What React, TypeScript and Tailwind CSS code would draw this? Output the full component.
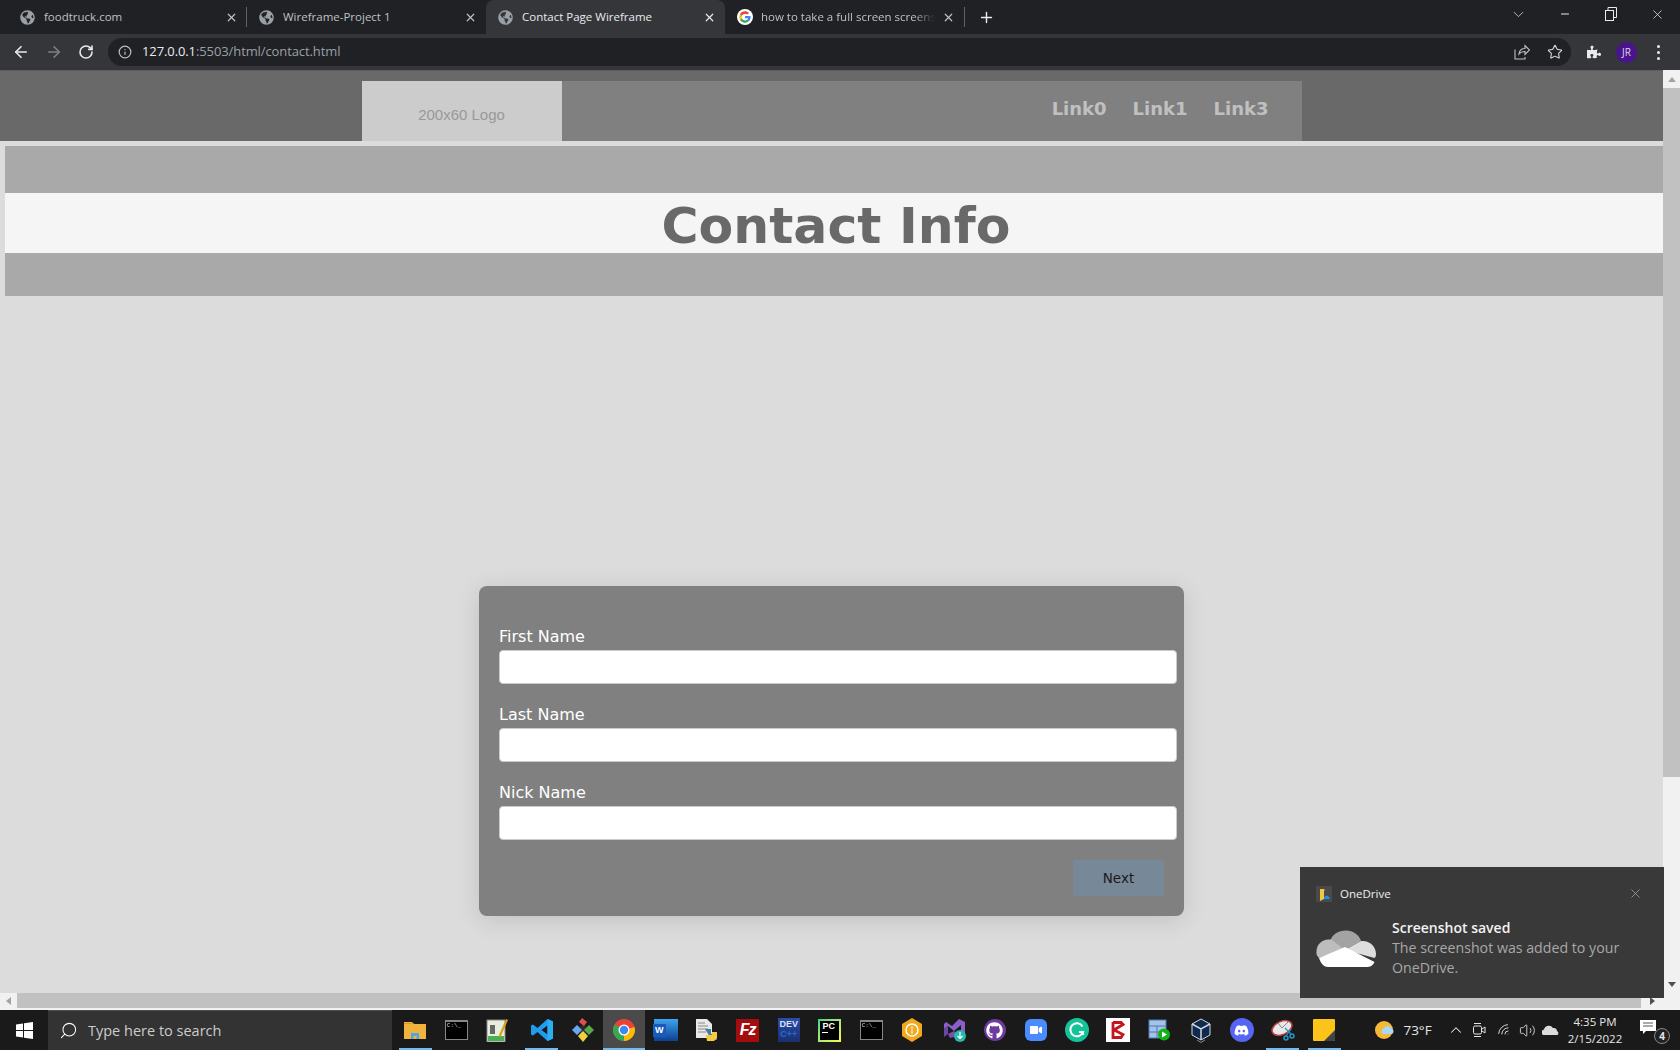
import React from "react";
import { ArrowLeft, ArrowRight, RotateCw, Info, Star, X, Plus, ChevronDown, Minus, Search, ChevronUp, Volume2, Wifi } from "lucide-react";
import { FaGlobeAmericas, FaGithub, FaDiscord, FaPuzzlePiece, FaVideo } from "react-icons/fa";

const ui = "font-['Open_Sans','Noto_Sans',sans-serif]";

function GoogleG() {
  return (
    <svg width="16" height="16" viewBox="0 0 48 48" className="shrink-0">
      <circle cx="24" cy="24" r="24" fill="#fff" />
      <path fill="#EA4335" d="M24 14c2.7 0 5 .9 6.8 2.7l5-5C32.800 8.800 28.800 7 24 7 17.400 7 11.700 10.800 8.900 16.300l5.900 4.600C16.200 16.800 19.800 14 24 14z" />
      <path fill="#4285F4" d="M40.600 24.400c0-1.200-.1-2.300-.3-3.400H24v6.500h9.300c-.4 2.100-1.600 3.900-3.400 5.100l5.700 4.400c3.300-3.100 5-7.600 5-12.600z" />
      <path fill="#FBBC05" d="M14.800 27.100c-.4-1-.6-2-.6-3.100s.2-2.100.6-3.100l-5.900-4.600C7.700 18.700 7 21.300 7 24s.7 5.300 1.900 7.700l5.900-4.600z" />
      <path fill="#34A853" d="M24 41c4.600 0 8.500-1.500 11.400-4.100l-5.600-4.300c-1.600 1.100-3.600 1.700-5.800 1.700-4.200 0-7.800-2.800-9.200-6.700l-5.900 4.500C11.700 37.200 17.400 41 24 41z" />
    </svg>
  );
}

function Tab({ title, active, google, fade }: { title: string; active?: boolean; google?: boolean; fade?: boolean }) {
  return (
    <div className={`w-[239px] h-[34px] flex items-center pl-[12px] pr-[9px] shrink-0 ${active ? "bg-[#35363a] rounded-t-[8px]" : ""}`}>
      {google ? <GoogleG /> : <FaGlobeAmericas size={15} className="text-[#9aa0a6] shrink-0" />}
      <span className={`${google ? "ml-[8px]" : "ml-[9px]"} w-[174px] overflow-hidden whitespace-nowrap text-[11.5px] ${active ? "text-[#e8eaed]" : "text-[#bdc1c6]"} ${fade ? "[mask-image:linear-gradient(to_right,black_88%,transparent)]" : ""}`}>{title}</span>
      <X size={13} strokeWidth={2.2} className={`ml-auto shrink-0 ${active ? "text-[#e8eaed]" : "text-[#bdc1c6]"}`} />
    </div>
  );
}

function TabBar() {
  return (
    <div className="h-[34px] bg-[#202124] flex items-center shrink-0 relative">
      <div className="w-[8px]" />
      <Tab title="foodtruck.com" />
      <div className="w-px h-[20px] bg-[#5f6368] -ml-px" />
      <Tab title="Wireframe-Project 1" />
      <Tab title="Contact Page Wireframe" active />
      <Tab title="how to take a full screen screenshot" google fade />
      <div className="w-px h-[20px] bg-[#5f6368]" />
      <Plus size={17} strokeWidth={2} className="ml-[13px] text-[#e8eaed]" />
      <div className="ml-auto flex items-center h-full pb-[6px]">
        <ChevronDown size={17} strokeWidth={1.1} className="text-[#dadce0]" />
        <div className="w-[46px] ml-[15px] flex justify-center"><Minus size={12} className="text-[#e8eaed]" /></div>
        <div className="w-[46px] flex justify-center">
          <svg width="12" height="14" viewBox="0 0 12 14" fill="none" stroke="#e8eaed" strokeWidth="1"><rect x="0.500" y="3.500" width="8" height="10" /><path d="M3 3.500V.500h8.500v10H8.500" /></svg>
        </div>
        <div className="w-[46px] flex justify-center"><X size={15} strokeWidth={1.2} className="text-[#e8eaed]" /></div>
      </div>
    </div>
  );
}

function Toolbar() {
  return (
    <div className="h-[36px] bg-[#35363a] flex items-center shrink-0">
      <div className="w-[42px] flex justify-center"><ArrowLeft size={18} strokeWidth={2.2} className="text-[#e8eaed]" /></div>
      <div className="w-[24px] flex justify-center"><ArrowRight size={18} strokeWidth={2.2} className="text-[#7d8084]" /></div>
      <div className="w-[40px] flex justify-center"><RotateCw size={16} strokeWidth={2.4} className="text-[#e8eaed]" /></div>
      <div className="w-[1463px] ml-[2px] h-[28px] rounded-full bg-[#202124] flex items-center pl-[10px] pr-[8px]">
        <Info size={14} className="text-[#bdc1c6]" />
        <span className="ml-[10px] text-[13px] tracking-[-0.1px] text-[#9aa0a6] whitespace-nowrap"><span className="text-[#e8eaed]">127.0.0.1</span>:5503/html/contact.html</span>
        <div className="ml-auto flex items-center gap-[17px]">
          <svg width="16" height="16" viewBox="0 0 16 16" fill="none" stroke="#bdc1c6" strokeWidth="1.100"><path d="M1 5.500v9.500h10v-2M5 10c.4-3.500 3-5.500 6-5.500V1.500L15.500 6 11 10.500V7.500C8.500 7.500 6.500 8 5 10z" /></svg>
          <Star size={16} strokeWidth={1.6} className="text-[#dadce0]" />
        </div>
      </div>
      <div className="w-[46px] flex justify-center"><FaPuzzlePiece size={14} className="text-[#e8eaed]" /></div>
      <div className="w-[21px] h-[21px] -ml-[1px] rounded-full bg-[#4a148c] flex items-center justify-center text-[10px] text-[#e1d4f2]">JR</div>
      <div className="ml-[20px] flex flex-col gap-[3px]">
        <div className="w-[3px] h-[3px] rounded-full bg-[#e8eaed]" />
        <div className="w-[3px] h-[3px] rounded-full bg-[#e8eaed]" />
        <div className="w-[3px] h-[3px] rounded-full bg-[#e8eaed]" />
      </div>
    </div>
  );
}

function Field({ label }: { label: string }) {
  return (
    <div className="flex flex-col">
      <label className="h-[24px] leading-[22px] text-[16px] text-white">{label}</label>
      <input className="h-[34px] w-[678px] bg-white rounded-[4px] border border-[#cccccc] outline-none" />
    </div>
  );
}

function Page() {
  return (
    <div className="flex-1 min-w-0 bg-[#dcdcdc] overflow-hidden font-['DejaVu_Sans',sans-serif]">
      <header className="h-[71px] bg-[#696969] pt-[10px] border-t border-[#5c5c62]">
        <div className="w-[940px] h-[60px] mx-auto bg-[#808080] flex items-center justify-between pr-[33px]">
          <div className="w-[200px] h-[60px] bg-[#cccccc] flex items-center justify-center pt-[8px] font-['Liberation_Sans',sans-serif] text-[15px] text-[#999999]">200x60 Logo</div>
          <nav className="flex gap-[26px] pb-[6px] text-[18px] font-bold text-[#c0c0c0]">
            <span>Link0</span>
            <span>Link1</span>
            <span>Link3</span>
          </nav>
        </div>
      </header>
      <section className="mt-[5px] mx-[5px] mr-0">
        <div className="h-[47px] bg-[#a9a9a9]" />
        <h1 className="h-[60px] leading-[66px] pl-[4px] bg-[#f5f5f5] text-center text-[50.5px] font-bold text-[#696969]">Contact Info</h1>
        <div className="h-[43px] bg-[#a9a9a9]" />
      </section>
      <form className="mt-[290px] ml-[479px] w-[705px] h-[330px] bg-[#808080] rounded-[8px] shadow-[0_4px_24px_rgba(0,0,0,0.12)] pt-[40px] pl-[20px] flex flex-col gap-[20px]">
        <Field label="First Name" />
        <Field label="Last Name" />
        <Field label="Nick Name" />
        <div className="flex justify-end pr-[20px]">
          <button type="button" className="w-[91px] h-[36px] bg-[#778899] text-[13.5px] text-[#1a1a1a]">Next</button>
        </div>
      </form>
    </div>
  );
}

function VScroll() {
  return (
    <div className="w-[17px] shrink-0 bg-[#f1f1f1] flex flex-col items-center">
      <div className="h-[18px] flex items-center justify-center">
        <div className="w-0 h-0 border-x-[4px] border-x-transparent border-b-[5px] border-b-[#a3a3a3]" />
      </div>
      <div className="w-full h-[689px] bg-[#c1c1c1]" />
      <div className="flex-1" />
      <div className="h-[17px] flex items-center justify-center">
        <div className="w-0 h-0 border-x-[4px] border-x-transparent border-t-[5px] border-t-[#505050]" />
      </div>
    </div>
  );
}

function HScroll() {
  return (
    <div className="h-[17px] shrink-0 bg-[#f1f1f1] flex items-start">
      <div className="w-[17px] h-[15px] flex items-center justify-center">
        <div className="w-0 h-0 border-y-[4px] border-y-transparent border-r-[5px] border-r-[#a3a3a3]" />
      </div>
      <div className="w-[1624px] h-[15px] bg-[#c1c1c1]" />
      <div className="w-[22px] h-[15px] flex items-center justify-center">
        <div className="w-0 h-0 border-y-[4px] border-y-transparent border-l-[5px] border-l-[#505050]" />
      </div>
    </div>
  );
}

function Toast() {
  return (
    <div className={`absolute left-[1300px] top-[867px] w-[364px] h-[131px] bg-[#393939] ${ui}`}>
      <div className="flex items-center h-[16px] mt-[19px] ml-[16px]">
        <svg width="16" height="16" viewBox="0 0 16 16">
          <rect width="16" height="16" fill="#4a4a4a" />
          <path d="M4 3h4l1 1.500h-1V13L4 15z" fill="#f4c542" />
          <path d="M8 12c.3-1.500 1.500-2.500 2.800-2.200C12 9.500 13.500 11 14 13H8z" fill="#1f8ceb" />
        </svg>
        <span className="ml-[8px] text-[11.5px] text-[#f0f0f0]">OneDrive</span>
        <X size={15} strokeWidth={1.2} className="text-[#a8a8a8] ml-[237px] -mt-[1px]" />
      </div>
      <div className="flex mt-[23px] ml-[16px]">
        <svg width="60" height="40" viewBox="0 0 60 40" className="mt-[3px] shrink-0">
          <path d="M14 13c3-9 14-13 23-9 4 2 7 5 8 9l-16 9z" fill="#a3a3a3" />
          <path d="M16 12c-9-2-15 4-15.500 11C0 26 1 28 3 30l26-8z" fill="#bdbdbd" />
          <path d="M45 13c8-1 15 5 15 13 0 2-.5 3-1.500 4L29 22z" fill="#dedede" />
          <path d="M3 30l26-11 29.500 15c-1 2-3 5-7 5H12c-4 0-7-3-9-9z" fill="#ffffff" />
        </svg>
        <div className="ml-[16px] w-[240px] -mt-[7px] text-[14.2px] leading-[20px]">
          <div className="font-semibold text-[14px] text-[#f2f2f2]">Screenshot saved</div>
          <div className="text-[#a8a8a8]">The screenshot was added to your OneDrive.</div>
        </div>
      </div>
    </div>
  );
}

const Cell = ({ children, active, extra }: { children: React.ReactNode; active?: boolean; extra?: string }) => (
  <div className={`w-[41.2px] h-[40px] flex items-center justify-center relative shrink-0 ${active ? "bg-[#4a4a4a]" : ""} ${extra ?? ""}`}>{children}</div>
);

const Underline = ({ w = "w-[33px]" }: { w?: string }) => <div className={`absolute bottom-0 left-[4px] ${w} h-[2px] bg-[#76b9ed]`} />;

const Cmd = () => (
  <div className="w-[23px] h-[20px] bg-black border border-[#888] border-t-[2px] text-[6px] leading-[8px] pl-[1px] text-[#ddd] font-['Liberation_Mono',monospace]">C:\_</div>
);

function TaskIcons() {
  return (
    <div className="flex ml-[3px]">
      <Cell>
        <svg width="22" height="20" viewBox="0 0 22 20"><path d="M0 2h8l2 2h12v15H0z" fill="#f2b33d" /><path d="M0 4h9l1-1H0z" fill="#d99a22" /><path d="M7 19v-6h8v6h-2.500v-3h-3v3z" fill="#4aa8ea" /></svg>
        <Underline />
      </Cell>
      <Cell><Cmd /></Cell>
      <Cell>
        <svg width="24" height="24" viewBox="0 0 24 24"><rect x="2" y="2" width="18" height="22" fill="#e8eede" stroke="#888" /><rect x="5" y="7" width="5" height="9" fill="#666" /><path d="M3 18h16v5H3z" fill="#4caf50" /><path d="M14 17L21 1l2 1-7 16-2 1z" fill="#d9a21b" /></svg>
      </Cell>
      <Cell extra="ml-[3px]">
        <svg width="24" height="24" viewBox="0 0 24 24"><path d="M17.500 1L23 3.500v17L17.500 23 7.500 14 3 17.500 1 16.500v-9L3 6.500 7.500 10zM17.500 7.500L11.500 12l6 4.500z" fill="#1f9cf0" /><path d="M17.500 1L23 3.500v17L17.500 23z" fill="#2bb0f5" /></svg>
        <Underline />
      </Cell>
      <Cell>
        <svg width="24" height="26" viewBox="0 0 24 26"><path d="M12 7l6 6-6 6-6-6z" fill="#2c2c2c" /><path d="M1 13l5-5 5 5-5 5z" fill="#6ba6f5" /><path d="M13 13l5-5 5 5-5 5z" fill="#55a845" /><path d="M12 14l5 5-5 6-5-6z" fill="#f2d13c" /><path d="M8 5l3-4 5 4-3 4z" fill="#e2504d" /></svg>
      </Cell>
      <Cell active>
        <svg width="24" height="24" viewBox="0 0 24 24">
          <circle cx="12" cy="12" r="11" fill="#ea4335" />
          <path d="M12 12L22.500 9A11 11 0 0 1 12 23z" fill="#fbbc05" />
          <path d="M12 12L12 23A11 11 0 0 1 2.500 6.500z" fill="#34a853" />
          <circle cx="12" cy="12" r="5.500" fill="#fff" /><circle cx="12" cy="12" r="4.200" fill="#4285f4" />
        </svg>
        <div className="absolute bottom-0 left-0 w-full h-[2px] bg-[#76b9ed]" />
      </Cell>
      <Cell>
        <div className="relative w-[24px] h-[22px] bg-gradient-to-b from-[#41a5ee] to-[#103f91] ml-[1px]">
          <div className="absolute -left-[1px] top-[5px] w-[13px] h-[13px] bg-[#185abd] flex items-center justify-center text-[9px] font-bold text-white font-['Liberation_Sans',sans-serif]">W</div>
        </div>
      </Cell>
      <Cell>
        <svg width="24" height="24" viewBox="0 0 24 24"><path d="M2 1h11l5 5v14H2z" fill="#e8e8e8" /><path d="M4 5h7M4 8h10M4 11h10M4 14h8" stroke="#888" /><path d="M11 11h6v5h6v6h-5z" fill="#3d7ab0" /><path d="M12 17h6v-3h5v6l-3 3h-7z" fill="#f7cc3a" /></svg>
      </Cell>
      <Cell>
        <div className="w-[23px] h-[23px] bg-[#a30d0d] flex items-center justify-center text-[16px] italic font-bold text-white font-['Liberation_Sans',sans-serif] tracking-[-1px]">Fz</div>
      </Cell>
      <Cell>
        <div className="w-[22px] h-[24px] bg-gradient-to-b from-[#2c4da8] to-[#1a2f6e] flex flex-col items-center text-[9px] leading-[10px] font-bold font-['Liberation_Sans',sans-serif]">
          <span className="text-[#d8e2f5] mt-[1px]">DEV</span>
          <span className="text-[#1f6fd1]">C++</span>
        </div>
      </Cell>
      <Cell>
        <div className="w-[23px] h-[23px] bg-gradient-to-br from-[#21d789] to-[#fcf84a] p-[2px]">
          <div className="w-full h-full bg-black text-[9px] leading-[10px] font-bold text-white pl-[2px] font-['Liberation_Sans',sans-serif]">PC<div className="w-[6px] h-[1.500px] bg-white mt-[1px]" /></div>
        </div>
      </Cell>
      <Cell><Cmd /></Cell>
      <Cell>
        <svg width="22" height="24" viewBox="0 0 22 24"><path d="M11 0l10 6v12l-10 6-10-6V6z" fill="#f2a91c" /><circle cx="11" cy="12" r="6" fill="none" stroke="#fff" strokeWidth="1.500" /><path d="M11 8v8" stroke="#fff" /></svg>
      </Cell>
      <Cell>
        <svg width="24" height="24" viewBox="0 0 24 24"><path d="M17 1l6 3v13h-4V7l-7 6-6-5-4 3V6l2-2 6 4z" fill="#8a5fc7" /><path d="M2 11l4-3v8l-4 3z" fill="#6a46a6" /><path d="M6 16l6-3 3 3-3 3-4 1z" fill="#7650b5" /><circle cx="18" cy="18" r="6" fill="#2ab7ac" /><path d="M18 14v6M15.500 18l2.500 2.500 2.500-2.500" stroke="#fff" fill="none" strokeWidth="1.200" /></svg>
      </Cell>
      <Cell>
        <div className="w-[22px] h-[22px] rounded-full bg-[#6e3a9e] flex items-center justify-center"><FaGithub size={17} className="text-white" /></div>
      </Cell>
      <Cell>
        <div className="w-[22px] h-[22px] rounded-[6px] bg-[#4a8cff] flex items-center justify-center"><FaVideo size={12} className="text-white" /></div>
      </Cell>
      <Cell>
        <div className="w-[24px] h-[24px] rounded-full bg-[#15c39a] flex items-center justify-center">
          <svg width="16" height="16" viewBox="0 0 16 16" fill="none" stroke="#fff" strokeWidth="2"><path d="M13.500 4.500A6.500 6.500 0 1 0 14 10H10" /><path d="M14 10v3" /></svg>
        </div>
      </Cell>
      <Cell>
        <div className="w-[24px] h-[24px] bg-white flex items-center justify-center">
          <svg width="14" height="18" viewBox="0 0 14 18" fill="none" stroke="#c4161c" strokeWidth="2.800"><path d="M2 1.500h8l2 2-9 5.500 9 4.500-2 3H2V1z" /></svg>
        </div>
      </Cell>
      <Cell>
        <svg width="22" height="22" viewBox="0 0 22 22"><rect x="1" y="1" width="17" height="18" fill="#a5c3e6" stroke="#4b79b5" /><path d="M1 7h17M1 13h17M9 7v12" stroke="#4b79b5" /><circle cx="16" cy="15.500" r="6" fill="#12b312" /><path d="M14 12.500l5 3-5 3z" fill="#fff" /></svg>
      </Cell>
      <Cell>
        <svg width="22" height="25" viewBox="0 0 22 25"><path d="M11 1l9 5v11l-9 5-9-5V6z" fill="#102a4d" stroke="#cfd8e3" /><path d="M2 6l9 5 9-5M11 11v11" stroke="#cfd8e3" fill="none" strokeWidth="1.500" /><path d="M7 22l4 2.500 4-2.500" stroke="#888" fill="none" /></svg>
      </Cell>
      <Cell>
        <div className="w-[24px] h-[24px] rounded-full bg-[#5865f2] flex items-center justify-center"><FaDiscord size={15} className="text-white" /></div>
      </Cell>
      <Cell>
        <svg width="24" height="24" viewBox="0 0 24 24"><ellipse cx="11" cy="10" rx="10.500" ry="6.500" transform="rotate(-25 11 10)" fill="#e8e8e8" stroke="#c04040" strokeWidth="1.500" /><path d="M11 10L17 4M11 10L7 5" stroke="#888" /><circle cx="15" cy="20" r="2" fill="none" stroke="#2196c9" strokeWidth="1.500" /><circle cx="21" cy="18" r="2" fill="none" stroke="#2196c9" strokeWidth="1.500" /><path d="M15 18l5-7M20 16l-6-6" stroke="#2196c9" strokeWidth="1.200" /></svg>
        <Underline />
      </Cell>
      <Cell>
        <div className="relative w-[22px] h-[22px] bg-[#fcc419] rounded-[1px] overflow-hidden">
          <svg width="22" height="22" viewBox="0 0 22 22" className="absolute inset-0"><path d="M22 11L11 22h11z" fill="#444" /></svg>
        </div>
        <Underline />
      </Cell>
    </div>
  );
}

function Tray() {
  return (
    <div className={`ml-auto flex items-center h-full text-[#e6e6e6] pr-[8px] ${ui}`}>
      <div className="w-[24px] flex justify-center">
        <svg width="22" height="20" viewBox="0 0 22 20"><circle cx="9" cy="10" r="9" fill="#f5b93a" /><path d="M8 14a3 3 0 0 1 1-5.500 4 4 0 0 1 7.500 0A3 3 0 0 1 17 14z" fill="#a8d8f5" /></svg>
      </div>
      <div className="w-[46px] pr-[7px] text-center text-[13.5px]">73°F</div>
      <div className="w-[24px] flex justify-center"><ChevronUp size={18} strokeWidth={1.4} /></div>
      <div className="w-[24px] flex justify-center">
        <svg width="18" height="18" viewBox="0 0 18 18" fill="none" stroke="#e6e6e6" strokeWidth="1"><rect x="2.500" y="5" width="8" height="8" rx="1.500" /><path d="M11 8l3-2v6l-3-2M3 2.500h7M3 15.500h7" /></svg>
      </div>
      <div className="w-[24px] flex justify-center"><Wifi size={15} strokeWidth={1.4} className="-rotate-45" /></div>
      <div className="w-[22px] flex justify-center"><Volume2 size={17} strokeWidth={1.2} /></div>
      <div className="w-[24px] flex justify-center">
        <svg width="17" height="11" viewBox="0 0 17 11"><path d="M1 10a3 3 0 0 1 1-5.500 5 5 0 0 1 9-1.500 3.500 3.500 0 0 1 4 3c2 1 1.500 4 0 4z" fill="#dcdcdc" /></svg>
      </div>
      <div className="w-[66px] text-center text-[11.5px] leading-[17px]"><div>4:35 PM</div><div>2/15/2022</div></div>
      <div className="w-[44px] flex justify-center relative">
        <svg width="18" height="16" viewBox="0 0 18 16" className="-mt-[6px] -ml-[4px]"><path d="M1 1h16v11H7l-3 3v-3H1z" fill="#fff" /><path d="M4 4h10M4 7h10" stroke="#555" /></svg>
        <div className="absolute left-[26px] top-[3px] w-[16px] h-[16px] rounded-full bg-[#222] border border-[#888] flex items-center justify-center text-[10px] font-bold">4</div>
      </div>
    </div>
  );
}

function Taskbar() {
  return (
    <div className="h-[40px] bg-[#1a1a1a] flex items-center shrink-0">
      <div className="w-[48px] flex justify-center">
        <svg width="17" height="17" viewBox="0 0 17 17" fill="#fff"><path d="M0 2.500l7-1V8H0zM8 1.300L17 0v8H8zM0 9h7v6.500l-7-1zM8 9h9v8l-9-1.300z" /></svg>
      </div>
      <div className={`w-[343.500px] h-[40px] bg-[#333333] border-t border-[#4d4d4d] flex items-center pl-[11px] text-[14.5px] text-[#cccccc] ${ui}`}>
        <Search size={19} strokeWidth={1.3} className="-scale-x-100 text-white" />
        <span className="ml-[10px]">Type here to search</span>
      </div>
      <TaskIcons />
      <Tray />
    </div>
  );
}

export default function App() {
  return (
    <div className={`relative w-[1680px] h-[1050px] overflow-hidden flex flex-col bg-[#dcdcdc] ${ui}`}>
      <TabBar />
      <Toolbar />
      <div className="flex-1 min-h-0 flex">
        <Page />
        <VScroll />
      </div>
      <HScroll />
      <Taskbar />
      <Toast />
    </div>
  );
}
